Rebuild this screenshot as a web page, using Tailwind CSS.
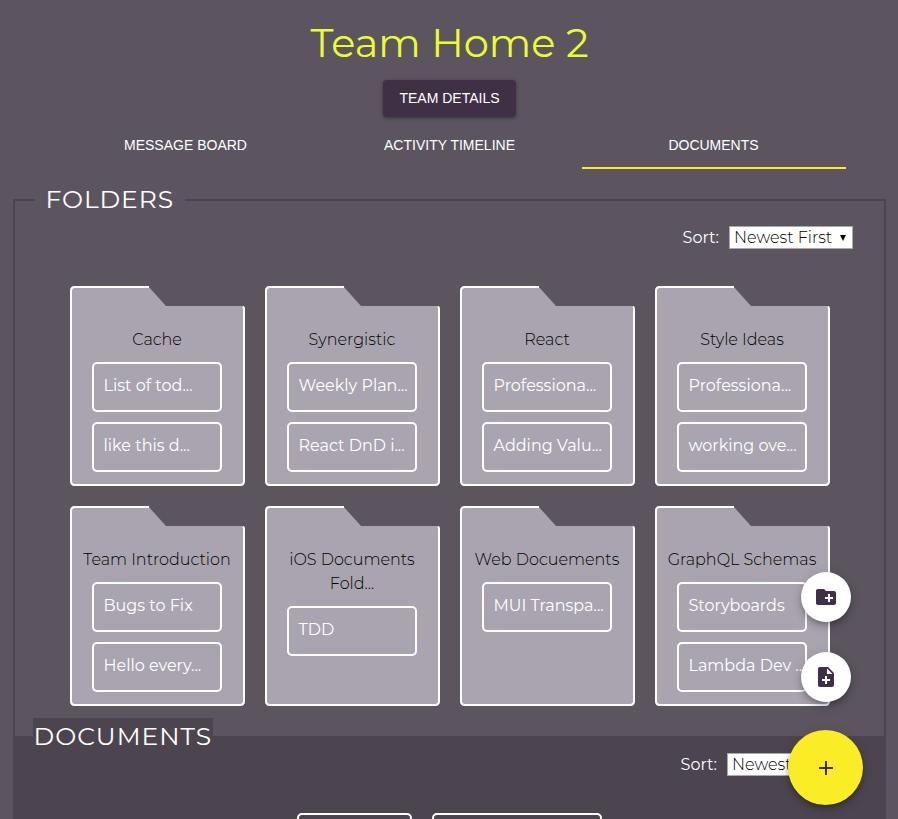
<!DOCTYPE html>
<html lang="en"><head><meta charset="utf-8"><title>Team Home 2</title><script src="https://cdn.jsdelivr.net/npm/@tailwindcss/browser@4"></script></head>
<body class="h-[819px] overflow-hidden bg-[#5c5560] font-[Montserrat,Inter,sans-serif] text-white">
<svg class="hidden"><symbol id="folder" viewBox="0 0 175 200"><path d="M0 5Q0 0 5 0H78L96 20H172Q175 20 175 23V195Q175 200 170 200H5Q0 200 0 195Z" fill="#aaa4b0"/><path d="M79 1H5Q1 1 1 5V195Q1 199 5 199H170Q174 199 174 195V23Q174 21.500 173 20.500" fill="none" stroke="#fff" stroke-width="2"/></symbol></svg>
<header class="flex flex-col items-center pt-[19px]">
  <h1 class="h-12 pl-px text-[40px] leading-[48px] text-[#e9ff2b]">Team Home 2</h1>
  <button class="mt-[13px] h-[37px] w-[133px] rounded bg-[#3f3045] pl-px font-[Liberation_Sans,Arial,sans-serif] text-sm leading-[37px] shadow-[0_1px_4px_rgba(0,0,0,.3),0_1px_2px_rgba(0,0,0,.14)]">TEAM DETAILS</button>
  <nav class="mt-1 ml-[2px] grid w-[792px] grid-cols-3 text-center font-[Liberation_Sans,Arial,sans-serif] text-sm leading-[48px]">
    <a class="h-12 pr-px">MESSAGE BOARD</a><a class="h-12 pr-px">ACTIVITY TIMELINE</a><a class="h-12 border-b-2 border-[#faed26] pr-px">DOCUMENTS</a>
  </nav>
</header>
<main class="mt-[13px] mr-3 ml-[13px] h-[637px] overflow-hidden">
<fieldset class="h-[556px] border-2 border-[#4c4550]">
  <legend class="ml-5 h-9 w-[150px] pl-[10.500px] text-[25px] leading-[34px] tracking-[.9px]">FOLDERS</legend>
  <div class="mt-2 flex h-[23px] items-center justify-end pr-[31px]">
    <span class="mr-[10px] text-base leading-[22px]">Sort:</span>
    <div class="flex h-[23px] w-[124px] items-center border border-[#a9a9a9] bg-white pl-1 text-base leading-5 font-light whitespace-nowrap text-black">Newest First<svg class="ml-[7px] h-2 w-2 shrink-0" viewBox="0 0 8 8"><path d="M1 1h6L4 7z"/></svg></div>
  </div>
  <div class="mt-[37px] ml-[55px] grid w-[760px] grid-cols-[repeat(4,175px)] gap-5 text-base leading-6">
    <section class="relative h-[200px]"><svg class="absolute inset-0 size-full"><use href="#folder"/></svg><div class="relative flex flex-col items-center pt-[42px] pr-px"><h2 class="font-light whitespace-nowrap text-black">Cache</h2><div class="mt-[10px] flex w-[130px] flex-col gap-[10px]"><p class="h-[50px] rounded-[5px] border-2 border-white pt-[10px] pl-[9.500px] whitespace-nowrap">List of tod...</p><p class="h-[50px] rounded-[5px] border-2 border-white pt-[10px] pl-[9.500px] whitespace-nowrap">like this d...</p></div></div></section>
    <section class="relative h-[200px]"><svg class="absolute inset-0 size-full"><use href="#folder"/></svg><div class="relative flex flex-col items-center pt-[42px] pr-px"><h2 class="font-light whitespace-nowrap text-black">Synergistic</h2><div class="mt-[10px] flex w-[130px] flex-col gap-[10px]"><p class="h-[50px] rounded-[5px] border-2 border-white pt-[10px] pl-[9.500px] whitespace-nowrap">Weekly Plan...</p><p class="h-[50px] rounded-[5px] border-2 border-white pt-[10px] pl-[9.500px] whitespace-nowrap">React DnD i...</p></div></div></section>
    <section class="relative h-[200px]"><svg class="absolute inset-0 size-full"><use href="#folder"/></svg><div class="relative flex flex-col items-center pt-[42px] pr-px"><h2 class="font-light whitespace-nowrap text-black">React</h2><div class="mt-[10px] flex w-[130px] flex-col gap-[10px]"><p class="h-[50px] rounded-[5px] border-2 border-white pt-[10px] pl-[9.500px] whitespace-nowrap">Professiona...</p><p class="h-[50px] rounded-[5px] border-2 border-white pt-[10px] pl-[9.500px] whitespace-nowrap">Adding Valu...</p></div></div></section>
    <section class="relative h-[200px]"><svg class="absolute inset-0 size-full"><use href="#folder"/></svg><div class="relative flex flex-col items-center pt-[42px] pr-px"><h2 class="font-light whitespace-nowrap text-black">Style Ideas</h2><div class="mt-[10px] flex w-[130px] flex-col gap-[10px]"><p class="h-[50px] rounded-[5px] border-2 border-white pt-[10px] pl-[9.500px] whitespace-nowrap">Professiona...</p><p class="h-[50px] rounded-[5px] border-2 border-white pt-[10px] pl-[9.500px] whitespace-nowrap">working ove...</p></div></div></section>
    <section class="relative h-[200px]"><svg class="absolute inset-0 size-full"><use href="#folder"/></svg><div class="relative flex flex-col items-center pt-[42px] pr-px"><h2 class="font-light whitespace-nowrap text-black">Team Introduction</h2><div class="mt-[10px] flex w-[130px] flex-col gap-[10px]"><p class="h-[50px] rounded-[5px] border-2 border-white pt-[10px] pl-[9.500px] whitespace-nowrap">Bugs to Fix</p><p class="h-[50px] rounded-[5px] border-2 border-white pt-[10px] pl-[9.500px] whitespace-nowrap">Hello every...</p></div></div></section>
    <section class="relative h-[200px]"><svg class="absolute inset-0 size-full"><use href="#folder"/></svg><div class="relative flex flex-col items-center pt-[42px] pr-px"><h2 class="text-center font-light whitespace-nowrap text-black">iOS Documents<br>Fold...</h2><div class="mt-[10px] flex w-[130px] flex-col gap-[10px]"><p class="h-[50px] rounded-[5px] border-2 border-white pt-[10px] pl-[9.500px] whitespace-nowrap">TDD</p></div></div></section>
    <section class="relative h-[200px]"><svg class="absolute inset-0 size-full"><use href="#folder"/></svg><div class="relative flex flex-col items-center pt-[42px] pr-px"><h2 class="font-light whitespace-nowrap text-black">Web Docuements</h2><div class="mt-[10px] flex w-[130px] flex-col gap-[10px]"><p class="h-[50px] rounded-[5px] border-2 border-white pt-[10px] pl-[9.500px] whitespace-nowrap">MUI Transpa...</p></div></div></section>
    <section class="relative h-[200px]"><svg class="absolute inset-0 size-full"><use href="#folder"/></svg><div class="relative flex flex-col items-center pt-[42px] pr-px"><h2 class="font-light whitespace-nowrap text-black">GraphQL Schemas</h2><div class="mt-[10px] flex w-[130px] flex-col gap-[10px]"><p class="h-[50px] rounded-[5px] border-2 border-white pt-[10px] pl-[9.500px] whitespace-nowrap">Storyboards</p><p class="h-[50px] rounded-[5px] border-2 border-white pt-[10px] pl-[9.500px] whitespace-nowrap">Lambda Dev ...</p></div></div></section>
  </div>
</fieldset>
<fieldset class="-mt-5 h-[200px] border-2 border-[#4c4550] bg-[#4c4550]">
  <legend class="ml-[18px] h-[38px] w-[180px] bg-[#4c4550] pl-[.5px] text-[25px] leading-9 tracking-[1px] whitespace-nowrap">DOCUMENTS</legend>
  <div class="-mt-[3px] flex h-[23px] items-center justify-end pr-[33px]">
    <span class="mr-[10px] text-base leading-[22px]">Sort:</span>
    <div class="flex h-[23px] w-[124px] items-center border border-[#a9a9a9] bg-white pl-1 text-base leading-5 font-light whitespace-nowrap text-black">Newest First</div>
  </div>
  <div class="mt-[37px] ml-[282px] flex gap-5"><div class="h-[50px] w-[115px] rounded-[5px] border-2 border-white"></div><div class="h-[50px] w-[170px] rounded-[5px] border-2 border-white"></div></div>
</fieldset>
</main>
<button class="fixed top-[572px] left-[801px] flex size-[50px] items-center justify-center rounded-full bg-white shadow-[0_3px_5px_-1px_rgba(0,0,0,.2),0_6px_10px_rgba(0,0,0,.14),0_1px_12px_rgba(0,0,0,.12)]"><svg class="size-6" viewBox="0 0 24 24" fill="#3f3045"><path d="M20 6h-8l-2-2H4c-1.110 0-1.990.89-1.990 2L2 18c0 1.110.89 2 2 2h16c1.110 0 2-.89 2-2V8c0-1.110-.89-2-2-2zm-1 8h-3v3h-2v-3h-3v-2h3V9h2v3h3v2z"/></svg></button>
<button class="fixed top-[652px] left-[801px] flex size-[50px] items-center justify-center rounded-full bg-white shadow-[0_3px_5px_-1px_rgba(0,0,0,.2),0_6px_10px_rgba(0,0,0,.14),0_1px_12px_rgba(0,0,0,.12)]"><svg class="size-6" viewBox="0 0 24 24" fill="#3f3045"><path d="M14 2H6c-1.100 0-1.990.9-1.990 2L4 20c0 1.100.89 2 1.990 2H18c1.100 0 2-.9 2-2V8l-6-6zm2 14h-3v3h-2v-3H8v-2h3v-3h2v3h3v2zm-3-7V3.500L18.500 9H13z"/></svg></button>
<button class="fixed top-[730px] left-[788px] flex size-[75px] items-center justify-center rounded-full bg-[#faed26] shadow-[0_3px_5px_-1px_rgba(0,0,0,.2),0_6px_10px_rgba(0,0,0,.14),0_1px_12px_rgba(0,0,0,.12)]"><svg class="size-6" viewBox="0 0 24 24" fill="#3f3045"><path d="M19 13h-6v6h-2v-6H5v-2h6V5h2v6h6v2z"/></svg></button>
</body></html>
